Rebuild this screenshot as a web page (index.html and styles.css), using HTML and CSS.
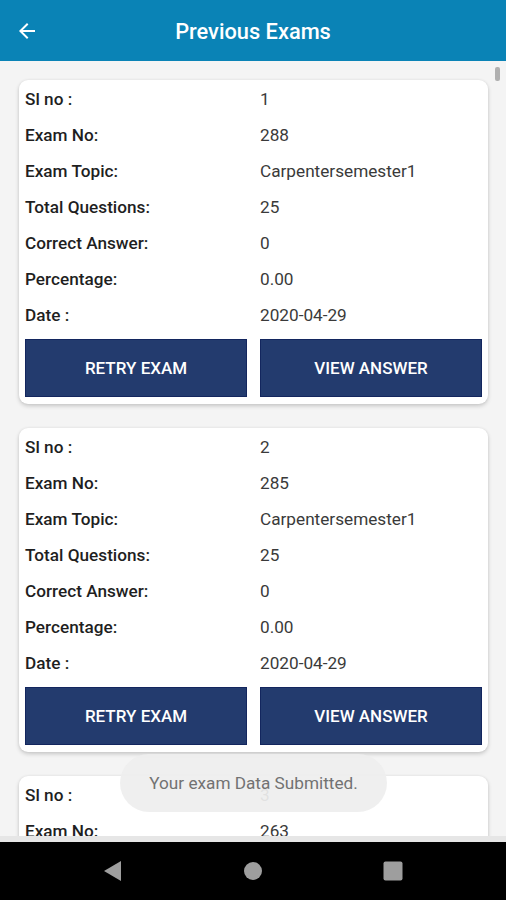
FILE: index.html
```html
<!DOCTYPE html>
<html>
<head>
<meta charset="utf-8">
<link rel="stylesheet" href="styles.css">
</head>
<body>
<div class="screen">
  <header class="appbar">
    <svg class="back" width="24" height="24" viewBox="0 0 24 24"><path d="M20 11H7.83l5.59-5.59L12 4l-8 8 8 8 1.41-1.41L7.83 13H20v-2z" fill="#fff"/></svg>
    <h1 class="title">Previous Exams</h1>
  </header>
  <main class="content">
    <div class="scrollbar"></div>
    <section class="card">
      <div class="row"><span class="label">Sl no :</span><span class="value">1</span></div>
      <div class="row"><span class="label">Exam No:</span><span class="value">288</span></div>
      <div class="row"><span class="label">Exam Topic:</span><span class="value">Carpentersemester1</span></div>
      <div class="row"><span class="label">Total Questions:</span><span class="value">25</span></div>
      <div class="row"><span class="label">Correct Answer:</span><span class="value">0</span></div>
      <div class="row"><span class="label">Percentage:</span><span class="value">0.00</span></div>
      <div class="row"><span class="label">Date :</span><span class="value">2020-04-29</span></div>
      <div class="actions"><button class="btn">RETRY EXAM</button><button class="btn">VIEW ANSWER</button></div>
    </section>
    <section class="card">
      <div class="row"><span class="label">Sl no :</span><span class="value">2</span></div>
      <div class="row"><span class="label">Exam No:</span><span class="value">285</span></div>
      <div class="row"><span class="label">Exam Topic:</span><span class="value">Carpentersemester1</span></div>
      <div class="row"><span class="label">Total Questions:</span><span class="value">25</span></div>
      <div class="row"><span class="label">Correct Answer:</span><span class="value">0</span></div>
      <div class="row"><span class="label">Percentage:</span><span class="value">0.00</span></div>
      <div class="row"><span class="label">Date :</span><span class="value">2020-04-29</span></div>
      <div class="actions"><button class="btn">RETRY EXAM</button><button class="btn">VIEW ANSWER</button></div>
    </section>
    <section class="card card-partial">
      <div class="row"><span class="label">Sl no :</span><span class="value">3</span></div>
      <div class="row"><span class="label">Exam No:</span><span class="value">263</span></div>
    </section>
    <div class="toast">Your exam Data Submitted.</div>
  </main>
  <nav class="navbar">
    <svg width="20" height="22" viewBox="0 0 20 22"><path d="M18 1 L1 11 L18 21 Z" fill="#9e9e9e"/></svg>
    <svg width="20" height="20" viewBox="0 0 20 20"><circle cx="10" cy="10" r="9" fill="#9e9e9e"/></svg>
    <svg width="20" height="20" viewBox="0 0 20 20"><rect x="0.5" y="0.5" width="19" height="19" rx="2" fill="#9e9e9e"/></svg>
  </nav>
</div>
</body>
</html>
```
FILE: styles.css
```css
* { box-sizing: border-box; }
html, body { margin: 0; padding: 0; }
body { font-family: Roboto, "Noto Sans", Arial, sans-serif; background: #000; }
.screen { width: 506px; height: 900px; display: flex; flex-direction: column; overflow: hidden; }
.appbar { height: 61px; flex: none; background: #0a83b6; display: flex; align-items: center; position: relative; padding-left: 15px; }
.back { flex: none; }
.title { position: absolute; left: 0; right: 0; top: 0; margin: 0; line-height: 64px; text-align: center; color: #fff; font-size: 21.8px; font-weight: 500; pointer-events: none; }
.content { flex: 1; background: #f4f4f4; padding: 19px 18px 0 19px; overflow: hidden; position: relative; display: flex; flex-direction: column; gap: 24px; border-bottom: 6px solid #e6e6e6; }
.scrollbar { position: absolute; right: 6px; top: 6px; width: 5px; height: 14px; background: #b0b0b0; border-radius: 2px; }
.card { flex: none; background: #fff; border-radius: 9px; padding: 1px 6px 7px 6px; box-shadow: 0 2px 4px rgba(0,0,0,0.18), 0 0 3px rgba(0,0,0,0.06); }
.card-partial { padding-bottom: 40px; }
.row { height: 36px; display: flex; align-items: center; font-size: 17.2px; }
.label { width: 235px; flex: none; font-weight: 500; color: #1f1f1f; }
.value { color: #3a3a3a; }
.actions { display: flex; gap: 13px; margin-top: 6px; }
.btn { flex: 1; height: 58px; background: #233b6e; border: 1px solid #13265e; color: #fff; font-family: inherit; font-size: 17px; font-weight: 500; padding: 0; }
.toast { position: absolute; left: 120px; top: 693px; width: 267px; height: 58px; border-radius: 29px; background: rgba(238,238,238,0.93); color: #727272; font-size: 17.2px; display: flex; align-items: center; justify-content: center; }
.navbar { height: 58px; flex: none; background: #000; display: flex; align-items: center; justify-content: center; gap: 120px; }
```
